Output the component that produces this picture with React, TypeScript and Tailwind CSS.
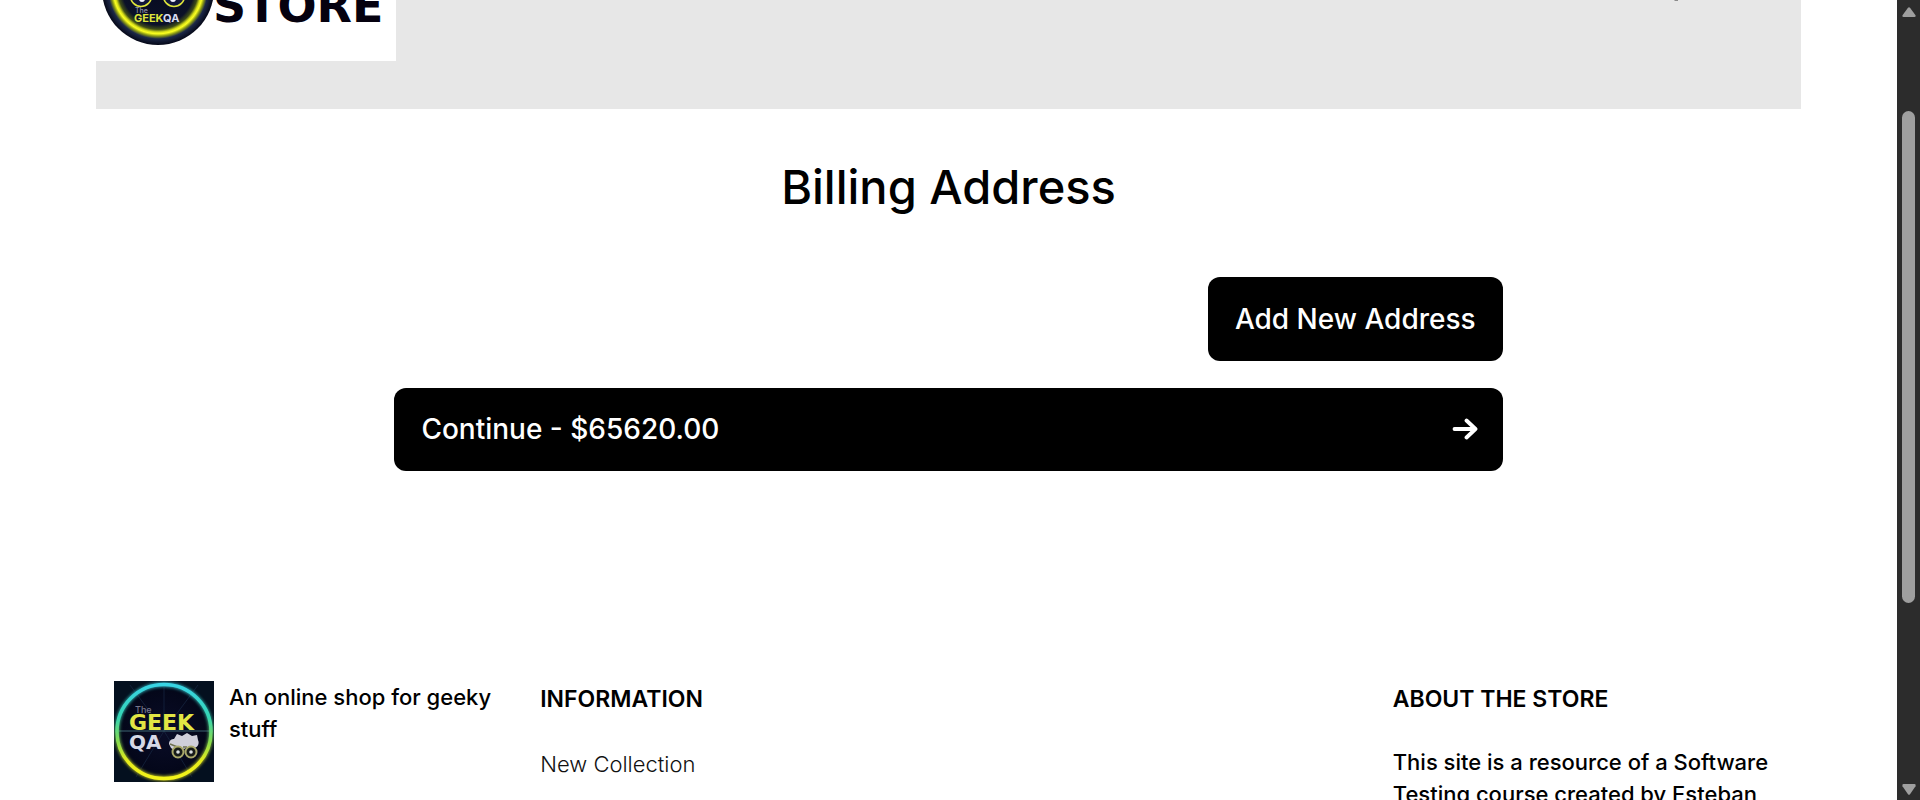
import React from 'react';

function StoreMark() {
  return (
    <svg viewBox="0 0 120 61" className="block h-[61px] w-[120px] shrink-0" aria-hidden="true">
      <defs>
        <radialGradient id="badge" gradientUnits="userSpaceOnUse" cx="62" cy="-11" r="56">
          <stop offset="0" stopColor="#080b20" />
          <stop offset="0.64" stopColor="#0b1128" />
          <stop offset="0.72" stopColor="#3f4d16" />
          <stop offset="0.77" stopColor="#d8e01a" />
          <stop offset="0.8" stopColor="#fbff20" />
          <stop offset="0.84" stopColor="#8d9c14" />
          <stop offset="0.89" stopColor="#1c2848" />
          <stop offset="1" stopColor="#050817" />
        </radialGradient>
      </defs>
      <circle cx="62" cy="-11" r="56" fill="url(#badge)" />
      <circle cx="45" cy="-4" r="10.5" fill="#10163a" stroke="#dfe63c" strokeWidth="1.600" />
      <circle cx="78" cy="-4" r="10.5" fill="#10163a" stroke="#dfe63c" strokeWidth="1.600" />
      <circle cx="46" cy="-1" r="3" fill="#f1f3ff" />
      <circle cx="77" cy="-1" r="3" fill="#f1f3ff" />
      <text x="39" y="13" fill="#8d90a8" className="font-['Inter',sans-serif] text-[7px]">The</text>
      <text x="38" y="22" className="font-['Inter',sans-serif] text-[11px] font-bold">
        <tspan fill="#dfe63c">GEEK</tspan>
        <tspan fill="#d9dcf2">QA</tspan>
      </text>
    </svg>
  );
}

function FooterMark() {
  return (
    <svg viewBox="0 0 100 101" className="block h-[101px] w-[100px] shrink-0" role="img" aria-label="The Geek QA">
      <defs>
        <linearGradient id="ring" gradientUnits="userSpaceOnUse" x1="0" y1="4" x2="0" y2="97">
          <stop offset="0" stopColor="#38d4e4" />
          <stop offset="0.35" stopColor="#35d5b4" />
          <stop offset="0.62" stopColor="#8bdc4a" />
          <stop offset="0.82" stopColor="#e6ec1c" />
          <stop offset="1" stopColor="#f4f41a" />
        </linearGradient>
        <radialGradient id="night">
          <stop offset="0" stopColor="#0a0d28" />
          <stop offset="0.8" stopColor="#04071a" />
          <stop offset="1" stopColor="#04101f" />
        </radialGradient>
        <filter id="glow" x="-20%" y="-20%" width="140%" height="140%">
          <feGaussianBlur stdDeviation="1.800" />
        </filter>
      </defs>
      <rect width="100" height="101" fill="url(#night)" />
      <path d="M50 50 16 4M50 50 84 4M50 50 22 96M50 50 78 96M50 50 50 4" stroke="#15243f" strokeWidth="0.800" />
      <path d="M2 50H98" stroke="#3d6470" strokeWidth="1" />
      <circle cx="50" cy="50.500" r="47" fill="none" stroke="url(#ring)" strokeWidth="5" opacity="0.7" filter="url(#glow)" />
      <circle cx="50" cy="50.500" r="47" fill="none" stroke="url(#ring)" strokeWidth="3.500" />
      <text x="21" y="32" fill="#77788c" className="font-['Inter',sans-serif] text-[9px]">The</text>
      <text x="15" y="49" fill="#e2e544" className="font-['DejaVu_Sans',sans-serif] text-[22px] font-bold">GEEK</text>
      <text x="15" y="68" fill="#d5d8e6" className="font-['DejaVu_Sans',sans-serif] text-[20px] font-bold">QA</text>
      <path d="M55 63c0-4 3-5 5-5l3-5 5 2 5-3 5 3 5-1 1 5c2 4-1 8-4 8l-6-1-4 2-5-2-5 3-3-2z" fill="#d0cfda" />
      <path d="M56 63l10 4M69 66h4" stroke="#6e7050" strokeWidth="1.500" />
      <g fill="#161a18" stroke="#a9a86a" strokeWidth="2">
        <circle cx="64" cy="71" r="5.500" />
        <circle cx="77" cy="71" r="5.500" />
      </g>
      <circle cx="64" cy="71" r="1.800" fill="#d9dfe0" />
      <circle cx="77" cy="71" r="1.800" fill="#d9dfe0" />
    </svg>
  );
}

function ArrowRight() {
  return (
    <svg viewBox="0 0 26 24" className="h-6 w-[26px]" fill="none" stroke="currentColor" strokeWidth="3.800" strokeLinecap="round" strokeLinejoin="round" aria-hidden="true">
      <path d="M2.500 12H23.500M14.500 3.500 23.500 12l-9 8.500" />
    </svg>
  );
}

function Scrollbar() {
  return (
    <div className="flex w-[23px] shrink-0 flex-col items-center bg-[#2c2c2c] pt-[7px] pb-[5px]" aria-hidden="true">
      <svg viewBox="0 0 14 10" className="h-[10px] w-[14px]" fill="#9f9f9f">
        <path d="M6 .8Q7-.4 8 .8l5.500 7.500Q14 10 12.500 10h-11Q0 10 .5 8.300z" />
      </svg>
      <div className="flex w-[13px] flex-1 flex-col pt-[94px] pb-[181px]">
        <div className="flex-1 rounded-full bg-[#9f9f9f]" />
      </div>
      <svg viewBox="0 0 14 11" className="h-[11px] w-[14px]" fill="#9f9f9f">
        <path d="M6 10.200Q7 11.400 8 10.200l5.500-8Q14 0 12.500 0h-11Q0 0 .5 2.200z" />
      </svg>
    </div>
  );
}

export default function App() {
  return (
    <div className="flex h-screen overflow-hidden bg-white font-['Inter',sans-serif] font-medium text-black">
      <div className="min-w-0 flex-1 overflow-hidden px-[5%]">
        <header className="flex h-[109px] items-start justify-between bg-[#e7e7e7] pr-[122px]">
          <a href="#home" className="flex h-[61px] w-[300px] items-start overflow-hidden bg-white">
            <StoreMark />
            <span className="-mt-[22px] -ml-[3px] font-['DejaVu_Sans',sans-serif] text-[46px] leading-[56px] font-bold text-[#05010f]">
              STORE
            </span>
          </a>
          <svg viewBox="0 0 6 2" className="h-[2px] w-[6px]" aria-hidden="true">
            <path d="M1 0h4v1H2z" fill="#8b8b8b" />
          </svg>
        </header>

        <main className="mx-auto w-[65%]">
          <h1 className="pt-12 text-center text-[47px] leading-[60px]">Billing Address</h1>
          <div className="mt-[60px] flex justify-end">
            <button type="button" className="h-[84px] rounded-xl bg-black px-[27px] text-[28px] leading-10 text-white">
              Add New Address
            </button>
          </div>
          <button type="button" className="mt-[27px] flex h-[83px] w-full items-center justify-between rounded-xl bg-black px-[27px] pr-[25px] pb-[2px] text-[28px] leading-10 text-white">
            <span>Continue - $65620.00</span>
            <ArrowRight />
          </button>
        </main>

        <footer className="mt-[210px] grid grid-cols-4 text-[22px] leading-8">
          <section className="flex items-start gap-[15px] pr-3 pl-[18px]">
            <FooterMark />
            <p>An online shop for geeky stuff</p>
          </section>
          <section className="px-[18px]">
            <h2 className="pt-[2px] text-[23px] font-semibold">INFORMATION</h2>
            <ul className="pt-[33px]">
              <li>
                <a href="#new-collection" className="font-light text-[#111]">New Collection</a>
              </li>
            </ul>
          </section>
          <section className="col-start-4 pr-3 pl-[18px]">
            <h2 className="pt-[2px] text-[23px] font-semibold">ABOUT THE STORE</h2>
            <p className="pt-[31px]">This site is a resource of a Software Testing course created by Esteban</p>
          </section>
        </footer>
      </div>
      <Scrollbar />
    </div>
  );
}
